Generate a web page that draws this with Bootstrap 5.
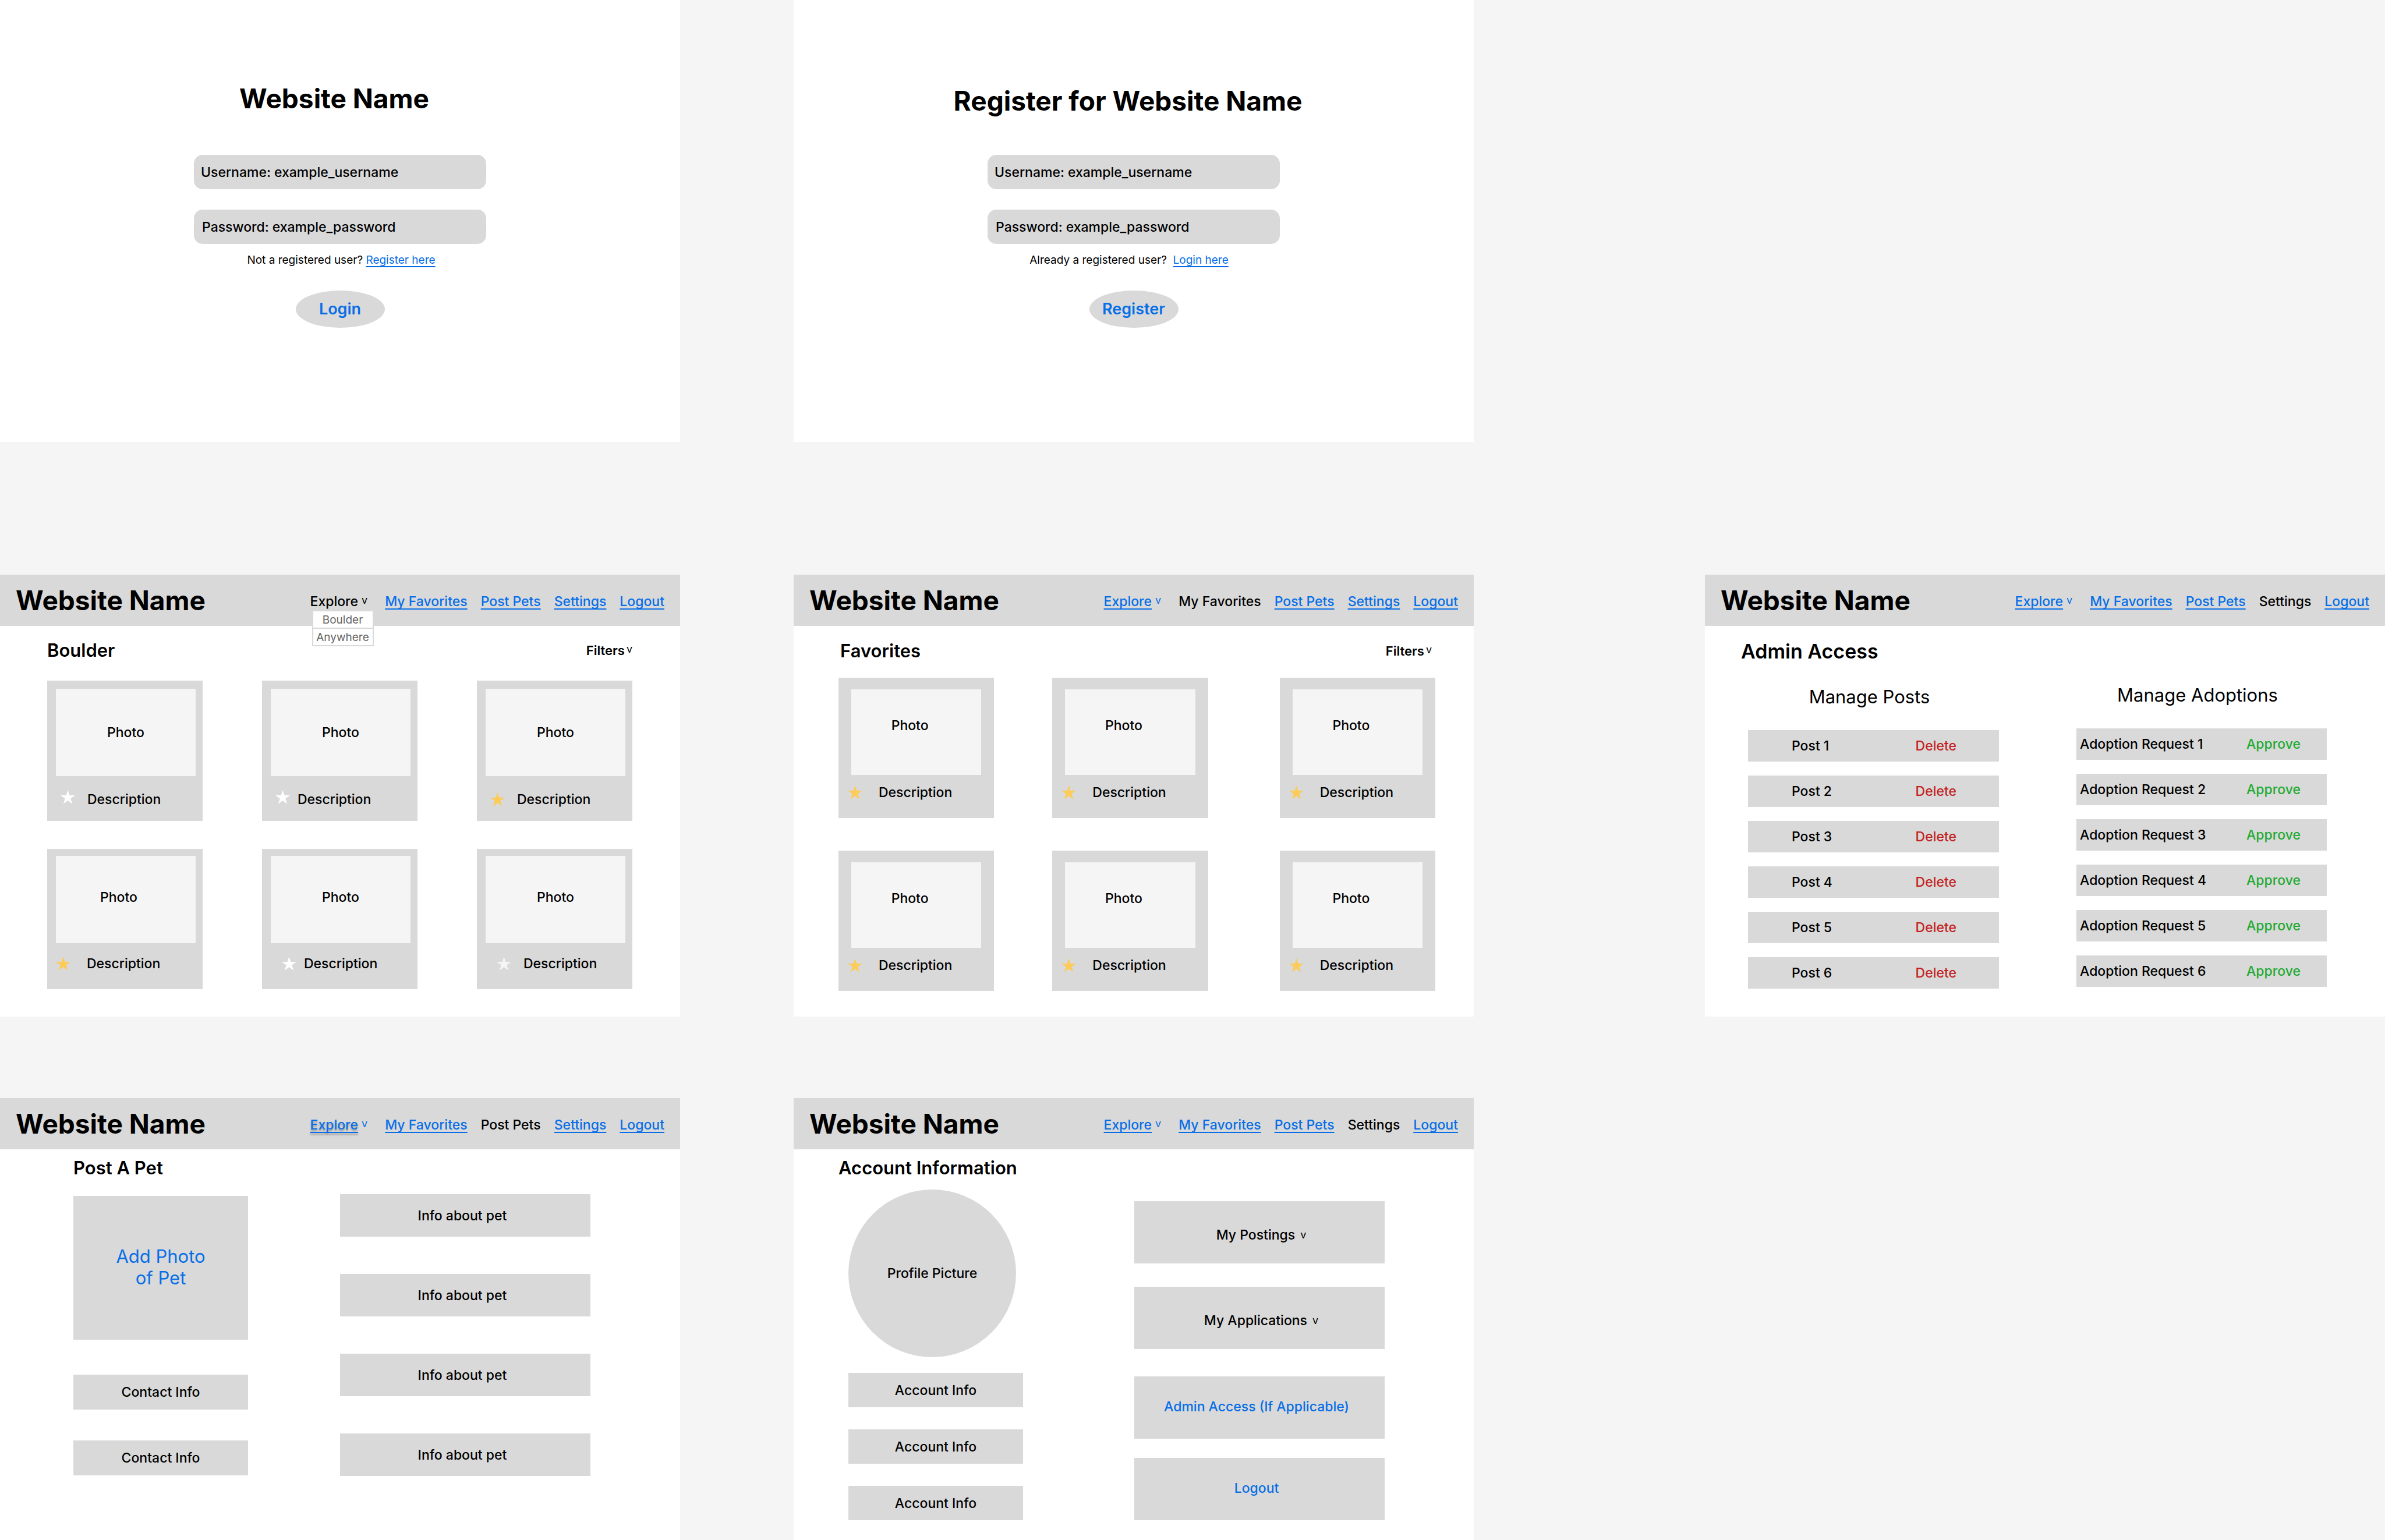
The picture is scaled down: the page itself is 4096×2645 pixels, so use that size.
<!DOCTYPE html>
<html lang="en">
<head>
<meta charset="utf-8">
<meta name="viewport" content="width=device-width, initial-scale=1">
<title>Website Name – wireframes</title>
<link rel="stylesheet" href="https://cdn.jsdelivr.net/npm/bootstrap@5.3.0/dist/css/bootstrap.min.css">
<style>
  :root { --panel: #d9d9d9; --canvas: #f5f5f5; --blue: #076ee8; --gold: #fccb58; }
  body { background: var(--canvas); color: #000; font-family: Inter, "Liberation Sans", sans-serif; font-size: 23px; font-weight: 500; line-height: 28px; }
  h1, h2, h3, p { margin: 0; }
  button { font: inherit; color: inherit; background: none; border: 0; padding: 0; }

  /* Board: rows of screens */
  .board-row { display: grid; grid-template-columns: 1168fr 195fr 1168fr 397fr 1168fr; }
  .board-row > :nth-child(2) { grid-column: 3; }
  .board-row > :nth-child(3) { grid-column: 5; }
  .screen { background: #fff; min-height: 759px; }
  .row-browse { margin-top: 228px; }
  .row-account { margin-top: 140px; }

  .link-blue { color: var(--blue); text-decoration: underline; text-decoration-thickness: 2px; text-underline-offset: 4px; text-decoration-skip-ink: none; }
  .text-blue { color: var(--blue); }
  .text-delete { color: #c32222; }
  .text-approve { color: #21ab32; }
  .caret-v { font-size: 18px; font-weight: 400; line-height: 24px; }

  /* Sign-in screens */
  .sign-form { width: 502px; padding-top: 141px; }
  .sign-title { font-size: 46px; font-weight: 700; line-height: 56px; padding-right: 20px; margin-bottom: 69px; white-space: nowrap; }
  .register-title { padding-top: 4px; margin-bottom: 65px; }
  .field { background: var(--panel); border-radius: 15px; height: 59px; padding: 0 12px; margin-bottom: 35px; gap: 6px; }
  .field input { flex: 1; min-width: 0; border: 0; background: none; padding: 0; font: inherit; color: #000; }
  .field + .field { margin-bottom: 15px; padding-left: 14px; }
  .sign-note { font-size: 19px; font-weight: 400; line-height: 26px; }
  .oval-btn { background: var(--panel); border-radius: 50%; width: 153px; height: 64px; margin-top: 39px; font-size: 27px; font-weight: 600; }

  /* Top bar */
  .topbar { background: var(--panel); height: 88px; padding: 0 27px; }
  .brand-name { font-size: 46px; font-weight: 700; line-height: 56px; }
  .topbar .navbar-nav { gap: 23px; padding-top: 4px; }
  .topbar .nav-item { padding: 0; }
  .topbar .dropdown { margin-right: 7px; gap: 6px; }
  .plain-link { color: #000; text-decoration: none; }
  .raised-link { text-shadow: 0 3px 3px rgba(0, 0, 0, .3); }
  .place-menu { position: absolute; top: 31px; left: 3px; width: 106px; margin: 0; padding: 0; list-style: none; border: 2px solid var(--panel); border-width: 0 2px; z-index: 2; font-size: 19px; font-weight: 400; text-align: center; background: #fff; }
  .place-menu a { display: block; height: 30px; line-height: 30px; color: #666; text-decoration: none; border-bottom: 2px solid var(--panel); }

  .page-title { font-size: 31px; font-weight: 600; line-height: 40px; }
  .filters { font-size: 22px; font-weight: 600; gap: 3px; }

  /* Pet galleries */
  .explore-body { padding: 22px 82px 0 81px; }
  .favorites-body { padding: 23px 66px 0 77px; }
  .explore-body header { margin-bottom: 32px; }
  .favorites-body header { margin-bottom: 26px; padding: 0 6px 0 3px; }
  .pet-grid { display: grid; grid-template-columns: 267fr 102fr 267fr 102fr 267fr; row-gap: 48px; }
  .favorites-body .pet-grid { grid-template-columns: 267fr 100fr 267fr 123fr 267fr; row-gap: 56px; }
  .pet-grid > :nth-child(3n+2) { grid-column: 3; }
  .pet-grid > :nth-child(3n) { grid-column: 5; }
  .pet-card { background: var(--panel); height: 241px; padding: 14px 12px 0 15px; }
  .pet-card.lower { padding-top: 12px; }
  .pet-photo { background: var(--canvas); height: 150px; }
  .pet-caption { gap: 21px; height: 80px; }
  .pet-card.lower .pet-caption { height: 70px; }
  .pet-caption.near { gap: 13px; }
  .pet-caption.inset { padding-left: 19px; }
  .pet-caption.apart { gap: 28px; }
  .star { width: 25px; height: 24px; flex: none; fill: #fff; }
  .star.gold { fill: var(--gold); }
  .star.pale { fill: var(--canvas); }
  .favorites-body .pet-card { padding: 20px 22px 0; }
  .favorites-body .pet-photo { height: 147px; padding: 0 22px 23px 0; }
  .favorites-body .pet-caption { height: 60px; margin-left: -6px; }

  /* Admin */
  .admin-body { padding: 24px 100px 0 74px; }
  .admin-body .page-title { font-size: 34px; margin-left: -12px; }
  .split { display: grid; grid-template-columns: 431fr 133fr 430fr; }
  .split > :last-child { grid-column: 3; }
  .col-title { font-size: 31px; font-weight: 400; line-height: 40px; text-align: center; padding-right: 14px; margin-bottom: 37px; }
  .bar-list { display: grid; row-gap: 24px; }
  .bar { background: var(--panel); height: 54px; display: grid; align-items: center; justify-items: start; grid-template-columns: 212fr 143fr; padding-left: 75px; }
  .bar.request { grid-template-columns: 286fr 138fr; padding-left: 6px; }
  .posts-col { padding-top: 38px; }
  .adopt-col { padding-top: 35px; }

  /* Post a pet and account */
  .block { background: var(--panel); border: 0; border-radius: 0; width: 100%; display: flex; align-items: center; justify-content: center; text-align: center; color: #000; font: inherit; }
  .block::placeholder { color: #000; opacity: 1; }
  .post-body { padding: 12px 154px 0 126px; }
  .post-body .split { grid-template-columns: 300fr 158fr 430fr; }
  .pet-col { padding-top: 28px; }
  .add-photo { height: 247px; padding-bottom: 4px; margin-bottom: 60px; font-size: 31px; font-weight: 400; line-height: 37px; color: var(--blue); }
  .contact-box { height: 60px; margin-bottom: 53px; }
  .info-list { display: grid; align-content: start; row-gap: 64px; padding-top: 25px; }
  .info-box { height: 73px; padding: 0 10px 0 0; }

  .account-body { padding: 12px 153px 0 94px; }
  .account-body .page-title { margin-left: -17px; }
  .account-body .split { grid-template-columns: 300fr 191fr 430fr; }
  .profile-col { padding-top: 17px; }
  .avatar { width: 288px; height: 288px; margin-bottom: 27px; border-radius: 50%; }
  .account-box { height: 59px; margin-bottom: 38px; }
  .action-col { padding-top: 37px; }
  .action-box { height: 107px; margin-bottom: 33px; padding: 0 10px 4px 0; text-decoration: none; color: var(--blue); }
  .action-box.toggle { color: #000; margin-bottom: 40px; padding: 8px 0 0 6px; gap: 9px; }
  .toggle + a.action-box { margin-top: 47px; }
</style>
</head>
<body>
<svg width="0" height="0" class="position-absolute" aria-hidden="true">
  <symbol id="star" viewBox="0 0 25 24"><path d="M12.5 0 15.4 9H25l-7.8 5.6 3 9.2-7.7-5.7-7.7 5.7 3-9.2L0 9h9.600z"/></symbol>
</svg>

<main>
  <div class="board-row">
    <section class="screen d-flex justify-content-center" id="login">
      <form class="sign-form">
        <h1 class="sign-title text-center">Website Name</h1>
        <div class="field d-flex align-items-center"><label for="login-user">Username:</label><input id="login-user" type="text" value="example_username"></div>
        <div class="field d-flex align-items-center"><label for="login-pass">Password:</label><input id="login-pass" type="text" value="example_password"></div>
        <p class="sign-note text-center ps-1">Not a registered user? <a class="link-blue" href="#register">Register here</a></p>
        <button class="oval-btn text-blue d-block mx-auto" type="button">Login</button>
      </form>
    </section>
    <section class="screen d-flex justify-content-center" id="register">
      <form class="sign-form">
        <h1 class="sign-title register-title d-flex justify-content-center">Register for Website Name</h1>
        <div class="field d-flex align-items-center"><label for="reg-user">Username:</label><input id="reg-user" type="text" value="example_username"></div>
        <div class="field d-flex align-items-center"><label for="reg-pass">Password:</label><input id="reg-pass" type="text" value="example_password"></div>
        <p class="sign-note text-center pe-3">Already a registered user?&nbsp; <a class="link-blue" href="#login">Login here</a></p>
        <button class="oval-btn text-blue d-block mx-auto" type="button">Register</button>
      </form>
    </section>
  </div>

  <div class="board-row row-browse">
    <section class="screen" id="explore">
      <nav class="navbar navbar-expand topbar">
        <span class="brand-name">Website Name</span>
        <ul class="navbar-nav ms-auto">
          <li class="nav-item dropdown d-flex"><a class="plain-link" href="#explore">Explore</a><span class="caret-v">v</span>
            <ul class="place-menu">
              <li><a href="#boulder">Boulder</a></li>
              <li><a href="#anywhere">Anywhere</a></li>
            </ul>
          </li>
          <li class="nav-item"><a class="link-blue" href="#favorites">My Favorites</a></li>
          <li class="nav-item"><a class="link-blue" href="#post">Post Pets</a></li>
          <li class="nav-item"><a class="link-blue" href="#settings">Settings</a></li>
          <li class="nav-item"><a class="link-blue" href="#login">Logout</a></li>
        </ul>
      </nav>
      <div class="explore-body">
        <header class="d-flex justify-content-between align-items-center">
          <h2 class="page-title">Boulder</h2>
          <button class="filters d-flex" type="button">Filters<span class="caret-v">v</span></button>
        </header>
        <div class="pet-grid">
          <article class="pet-card"><div class="pet-photo d-flex align-items-center justify-content-center">Photo</div><div class="pet-caption ps-2 d-flex align-items-center"><svg class="star mb-2"><use href="#star"/></svg>Description</div></article>
          <article class="pet-card"><div class="pet-photo d-flex align-items-center justify-content-center">Photo</div><div class="pet-caption near ps-2 d-flex align-items-center"><svg class="star mb-2"><use href="#star"/></svg>Description</div></article>
          <article class="pet-card"><div class="pet-photo d-flex align-items-center justify-content-center">Photo</div><div class="pet-caption ps-2 d-flex align-items-center"><svg class="star gold"><use href="#star"/></svg>Description</div></article>
          <article class="pet-card lower"><div class="pet-photo d-flex align-items-center justify-content-center pb-2 pe-4">Photo</div><div class="pet-caption apart d-flex align-items-center"><svg class="star gold"><use href="#star"/></svg>Description</div></article>
          <article class="pet-card lower"><div class="pet-photo d-flex align-items-center justify-content-center pb-2">Photo</div><div class="pet-caption near inset d-flex align-items-center"><svg class="star"><use href="#star"/></svg>Description</div></article>
          <article class="pet-card lower"><div class="pet-photo d-flex align-items-center justify-content-center pb-2">Photo</div><div class="pet-caption inset d-flex align-items-center"><svg class="star pale"><use href="#star"/></svg>Description</div></article>
        </div>
      </div>
    </section>

    <section class="screen" id="favorites">
      <nav class="navbar navbar-expand topbar">
        <span class="brand-name">Website Name</span>
        <ul class="navbar-nav ms-auto">
          <li class="nav-item dropdown d-flex"><a class="link-blue" href="#explore">Explore</a><span class="caret-v text-blue">v</span></li>
          <li class="nav-item"><a class="plain-link" href="#favorites">My Favorites</a></li>
          <li class="nav-item"><a class="link-blue" href="#post">Post Pets</a></li>
          <li class="nav-item"><a class="link-blue" href="#settings">Settings</a></li>
          <li class="nav-item"><a class="link-blue" href="#login">Logout</a></li>
        </ul>
      </nav>
      <div class="favorites-body">
        <header class="d-flex justify-content-between align-items-center">
          <h2 class="page-title">Favorites</h2>
          <button class="filters d-flex" type="button">Filters<span class="caret-v">v</span></button>
        </header>
        <div class="pet-grid">
          <article class="pet-card"><div class="pet-photo d-flex align-items-center justify-content-center">Photo</div><div class="pet-caption apart d-flex align-items-center"><svg class="star gold"><use href="#star"/></svg>Description</div></article>
          <article class="pet-card"><div class="pet-photo d-flex align-items-center justify-content-center">Photo</div><div class="pet-caption apart d-flex align-items-center"><svg class="star gold"><use href="#star"/></svg>Description</div></article>
          <article class="pet-card"><div class="pet-photo d-flex align-items-center justify-content-center">Photo</div><div class="pet-caption apart d-flex align-items-center"><svg class="star gold"><use href="#star"/></svg>Description</div></article>
          <article class="pet-card"><div class="pet-photo d-flex align-items-center justify-content-center">Photo</div><div class="pet-caption apart d-flex align-items-center"><svg class="star gold"><use href="#star"/></svg>Description</div></article>
          <article class="pet-card"><div class="pet-photo d-flex align-items-center justify-content-center">Photo</div><div class="pet-caption apart d-flex align-items-center"><svg class="star gold"><use href="#star"/></svg>Description</div></article>
          <article class="pet-card"><div class="pet-photo d-flex align-items-center justify-content-center">Photo</div><div class="pet-caption apart d-flex align-items-center"><svg class="star gold"><use href="#star"/></svg>Description</div></article>
        </div>
      </div>
    </section>

    <section class="screen" id="admin">
      <nav class="navbar navbar-expand topbar">
        <span class="brand-name">Website Name</span>
        <ul class="navbar-nav ms-auto">
          <li class="nav-item dropdown d-flex"><a class="link-blue" href="#explore">Explore</a><span class="caret-v text-blue">v</span></li>
          <li class="nav-item"><a class="link-blue" href="#favorites">My Favorites</a></li>
          <li class="nav-item"><a class="link-blue" href="#post">Post Pets</a></li>
          <li class="nav-item"><a class="plain-link" href="#settings">Settings</a></li>
          <li class="nav-item"><a class="link-blue" href="#login">Logout</a></li>
        </ul>
      </nav>
      <div class="admin-body">
        <h2 class="page-title">Admin Access</h2>
        <div class="split">
          <div class="posts-col">
            <h3 class="col-title">Manage Posts</h3>
            <div class="bar-list">
              <div class="bar"><span>Post 1</span><button class="text-delete" type="button">Delete</button></div>
              <div class="bar"><span>Post 2</span><button class="text-delete" type="button">Delete</button></div>
              <div class="bar"><span>Post 3</span><button class="text-delete" type="button">Delete</button></div>
              <div class="bar"><span>Post 4</span><button class="text-delete" type="button">Delete</button></div>
              <div class="bar"><span>Post 5</span><button class="text-delete" type="button">Delete</button></div>
              <div class="bar"><span>Post 6</span><button class="text-delete" type="button">Delete</button></div>
            </div>
          </div>
          <div class="adopt-col">
            <h3 class="col-title">Manage Adoptions</h3>
            <div class="bar-list">
              <div class="bar request"><span>Adoption Request 1</span><button class="text-approve" type="button">Approve</button></div>
              <div class="bar request"><span>Adoption Request 2</span><button class="text-approve" type="button">Approve</button></div>
              <div class="bar request"><span>Adoption Request 3</span><button class="text-approve" type="button">Approve</button></div>
              <div class="bar request"><span>Adoption Request 4</span><button class="text-approve" type="button">Approve</button></div>
              <div class="bar request"><span>Adoption Request 5</span><button class="text-approve" type="button">Approve</button></div>
              <div class="bar request"><span>Adoption Request 6</span><button class="text-approve" type="button">Approve</button></div>
            </div>
          </div>
        </div>
      </div>
    </section>
  </div>

  <div class="board-row row-account">
    <section class="screen" id="post">
      <nav class="navbar navbar-expand topbar">
        <span class="brand-name">Website Name</span>
        <ul class="navbar-nav ms-auto">
          <li class="nav-item dropdown d-flex"><a class="link-blue raised-link" href="#explore">Explore</a><span class="caret-v text-blue">v</span></li>
          <li class="nav-item"><a class="link-blue" href="#favorites">My Favorites</a></li>
          <li class="nav-item"><a class="plain-link" href="#post">Post Pets</a></li>
          <li class="nav-item"><a class="link-blue" href="#settings">Settings</a></li>
          <li class="nav-item"><a class="link-blue" href="#login">Logout</a></li>
        </ul>
      </nav>
      <div class="post-body">
        <h2 class="page-title">Post A Pet</h2>
        <div class="split">
          <div class="pet-col">
            <button class="block add-photo" type="button">Add Photo<br>of Pet</button>
            <input class="block contact-box" type="text" placeholder="Contact Info" aria-label="Contact info, first line">
            <input class="block contact-box" type="text" placeholder="Contact Info" aria-label="Contact info, second line">
          </div>
          <div class="info-list">
            <input class="block info-box" type="text" placeholder="Info about pet" aria-label="Info about pet, 1">
            <input class="block info-box" type="text" placeholder="Info about pet" aria-label="Info about pet, 2">
            <input class="block info-box" type="text" placeholder="Info about pet" aria-label="Info about pet, 3">
            <input class="block info-box" type="text" placeholder="Info about pet" aria-label="Info about pet, 4">
          </div>
        </div>
      </div>
    </section>

    <section class="screen" id="settings">
      <nav class="navbar navbar-expand topbar">
        <span class="brand-name">Website Name</span>
        <ul class="navbar-nav ms-auto">
          <li class="nav-item dropdown d-flex"><a class="link-blue" href="#explore">Explore</a><span class="caret-v text-blue">v</span></li>
          <li class="nav-item"><a class="link-blue" href="#favorites">My Favorites</a></li>
          <li class="nav-item"><a class="link-blue" href="#post">Post Pets</a></li>
          <li class="nav-item"><a class="plain-link" href="#settings">Settings</a></li>
          <li class="nav-item"><a class="link-blue" href="#login">Logout</a></li>
        </ul>
      </nav>
      <div class="account-body">
        <h2 class="page-title">Account Information</h2>
        <div class="split">
          <div class="profile-col">
            <div class="block avatar">Profile Picture</div>
            <div class="block account-box">Account Info</div>
            <div class="block account-box">Account Info</div>
            <div class="block account-box mb-0">Account Info</div>
          </div>
          <div class="action-col">
            <button class="block action-box toggle" type="button">My Postings<span class="caret-v">v</span></button>
            <button class="block action-box toggle" type="button">My Applications<span class="caret-v">v</span></button>
            <a class="block action-box" href="#admin">Admin Access (If Applicable)</a>
            <a class="block action-box mb-0" href="#login">Logout</a>
          </div>
        </div>
      </div>
    </section>
  </div>
</main>
<script src="https://cdn.jsdelivr.net/npm/bootstrap@5.3.0/dist/js/bootstrap.bundle.min.js"></script>
</body>
</html>
